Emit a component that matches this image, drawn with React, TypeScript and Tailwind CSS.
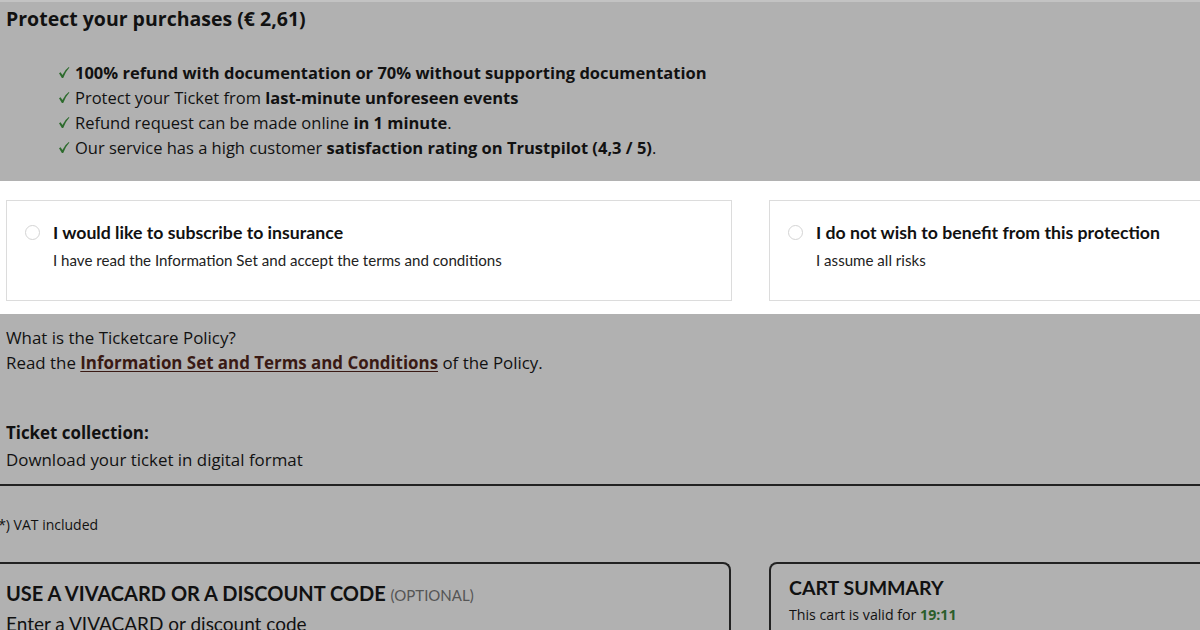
const body = { fontFamily: '"Open Sans", "Noto Sans", sans-serif' };
const geo = { fontFamily: 'Lato, "Noto Sans", sans-serif' };

const perks = [
  <><b>100% refund with documentation or 70% without supporting documentation</b></>,
  <>Protect your Ticket from <b>last-minute unforeseen events</b></>,
  <>Refund request can be made online <b>in 1 minute</b>.</>,
  <>Our service has a high customer <b>satisfaction rating on Trustpilot (4,3 / 5)</b>.</>,
];

function Tick() {
  return (
    <svg width="12" height="13" viewBox="0 0 12 13" className="shrink-0">
      <path d="M1 7.2 L2.6 6.2 L4.4 9 Q7 3.6 10.8 1 L11.4 1.6 Q7.6 5.6 5.2 12 L3.9 12 Z" fill="#2d6b2d" />
    </svg>
  );
}

function Option({ title, text, className }: { title: string; text: string; className: string }) {
  return (
    <div className={`flex shrink-0 items-start gap-[13px] border border-[#dcdcdc] bg-white pl-[18px] pt-[23px] ${className}`}>
      <span className="mt-[1px] h-[15px] w-[15px] shrink-0 rounded-full border border-[#d4d4d4]" />
      <div style={geo}>
        <div className="text-[17.7px] font-bold leading-[18px] text-[#111]">{title}</div>
        <div className="mt-[10px] text-[15.1px] leading-[16px] text-[#222]">{text}</div>
      </div>
    </div>
  );
}

export default function App() {
  return (
    <div className="h-[630px] w-[1200px] overflow-hidden bg-[#b1b1b1] text-[#111]" style={body}>
      <section className="h-[181px] border-t-[2px] border-[#c3c3c3] px-[6px] pt-[6px]">
        <h2 className="text-[19.5px] font-bold leading-[22px]">Protect your purchases (€ 2,61)</h2>
        <ul className="mt-[30px] ml-[52px] flex flex-col text-[16.5px] leading-[25px]">
          {perks.map((p, i) => (
            <li key={i} className="flex items-center gap-[5px]">
              <Tick />
              <span>{p}</span>
            </li>
          ))}
        </ul>
      </section>

      <section className="flex h-[133px] gap-[37px] overflow-hidden bg-white pl-[6px] pt-[19px]">
        <Option
          className="h-[101px] w-[726px]"
          title="I would like to subscribe to insurance"
          text="I have read the Information Set and accept the terms and conditions"
        />
        <Option
          className="h-[101px] w-[460px]"
          title="I do not wish to benefit from this protection"
          text="I assume all risks"
        />
      </section>

      <section className="px-[6px] pt-[11px] text-[16.9px] leading-[25px]">
        <p>What is the Ticketcare Policy?</p>
        <p>
          Read the{" "}
          <a className="font-bold text-[#3a1a14] underline underline-offset-2">Information Set and Terms and Conditions</a>{" "}
          of the Policy.
        </p>
        <p className="mt-[45px] font-bold">Ticket collection:</p>
        <p className="mt-[2px]">Download your ticket in digital format</p>
      </section>

      <div className="mt-[12px] h-[2px] bg-[#222]" />

      <p className="ml-[-6px] mt-[30px] text-[14px] leading-[18px]">(*) VAT included</p>

      <div className="mt-[28px] flex gap-[38px]">
        <div className="ml-[-10px] h-[80px] w-[741px] shrink-0 rounded-t-[8px] border-[2px] border-b-0 border-[#222] pl-[14px] pt-[17px]" style={geo}>
          <div className="text-[20px] font-bold uppercase leading-[24px]">
            Use a Vivacard or a discount code{" "}
            <span className="text-[15px] font-normal text-[#555]">(Optional)</span>
          </div>
          <div className="mt-[5px] text-[19px] leading-[24px]">Enter a VIVACARD or discount code</div>
        </div>
        <div className="h-[80px] w-[450px] shrink-0 rounded-t-[8px] border-[2px] border-b-0 border-[#222] pl-[18px] pt-[12px]">
          <div className="text-[19.5px] font-bold uppercase leading-[24px]" style={geo}>Cart summary</div>
          <div className="mt-[6px] text-[14.2px] leading-[18px]">
            This cart is valid for <b className="text-[#2b5e2b]">19:11</b>
          </div>
        </div>
      </div>
    </div>
  );
}
